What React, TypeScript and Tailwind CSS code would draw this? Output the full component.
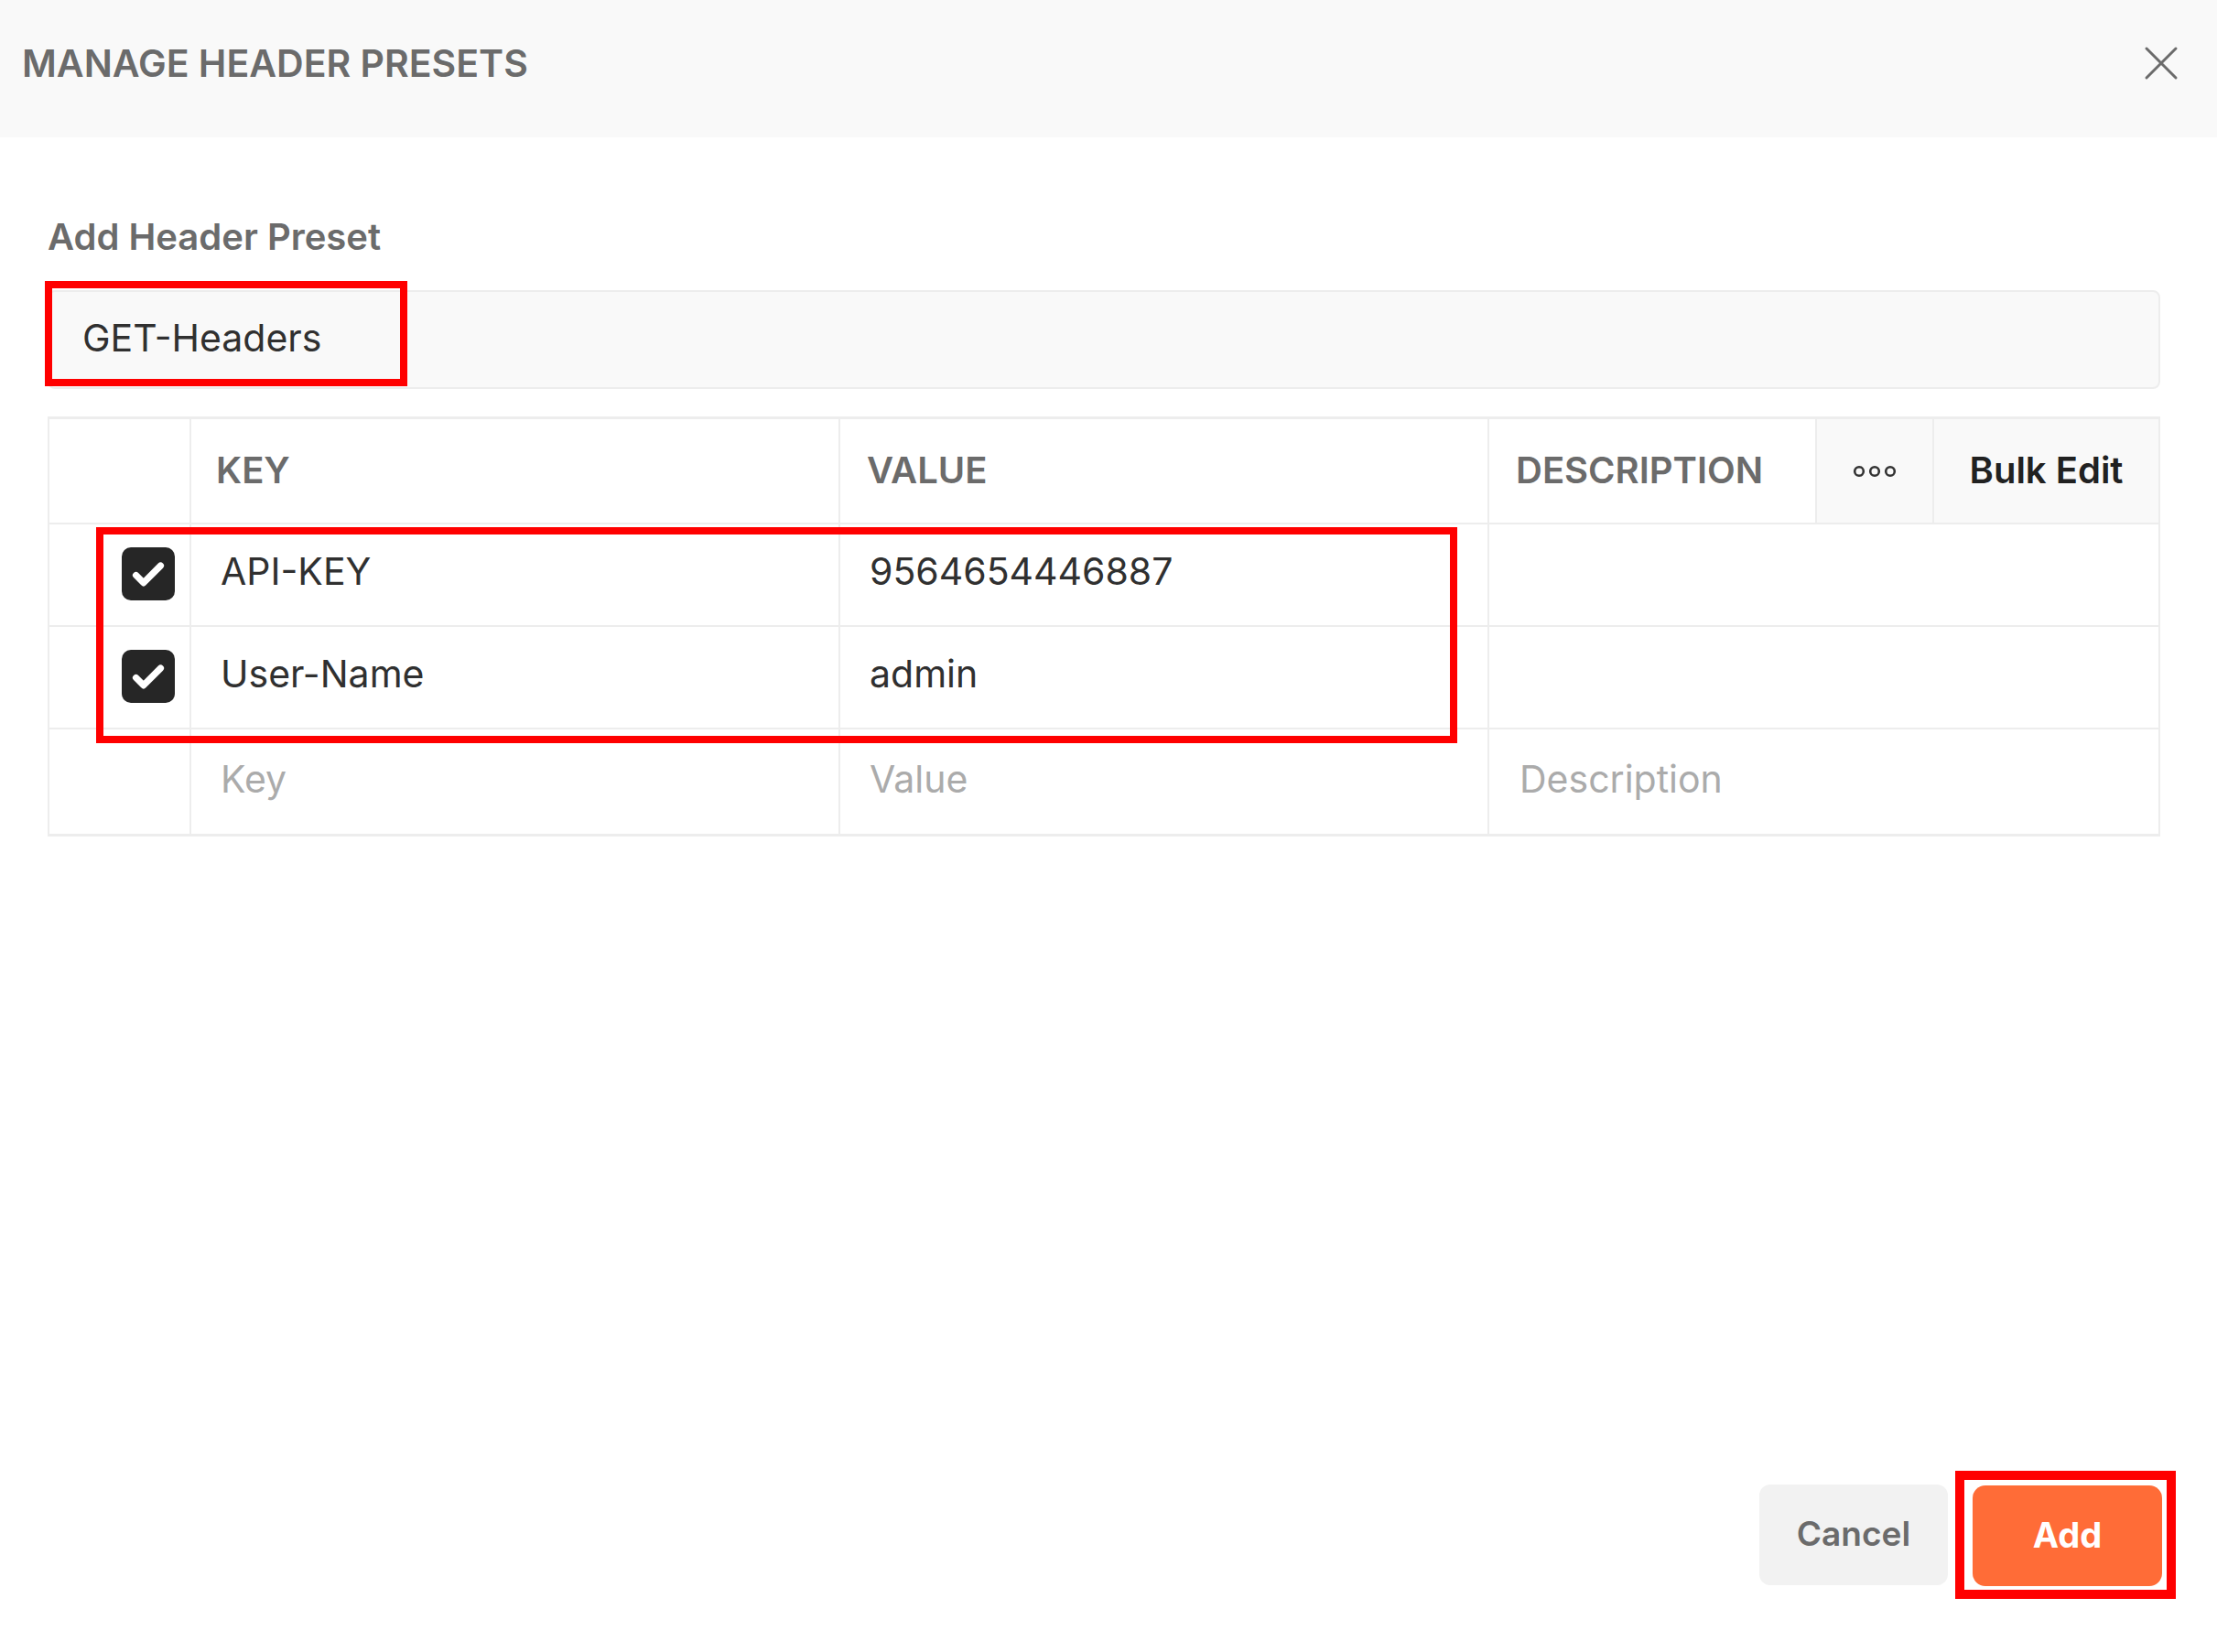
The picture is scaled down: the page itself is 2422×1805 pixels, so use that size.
const headers = [
  { key: "API-KEY", value: "9564654446887" },
  { key: "User-Name", value: "admin" },
];

const CheckIcon = () => (
  <div className="flex h-[58px] w-[58px] items-center justify-center rounded-[10px] bg-[#262626]">
    <svg width="46" height="46" viewBox="0 0 24 24" fill="none">
      <path
        d="M5 12.8l4.3 4.3L19 7.4"
        stroke="#ffffff"
        strokeWidth="3.8"
        strokeLinecap="round"
        strokeLinejoin="round"
      />
    </svg>
  </div>
);

const App = () => {
  return (
    <div className="flex min-h-screen flex-col bg-white font-['Inter','Liberation_Sans',sans-serif]">
      {/* header */}
      <div className="flex h-[150px] items-center justify-between bg-[#f9f9f9] pl-[24px] pr-[41px]">
        <h1 className="pb-[10px] text-[41px] font-semibold text-[#6b6b6b]">
          MANAGE HEADER PRESETS
        </h1>

        <button className="-mt-[12px] flex h-[40px] w-[40px] items-center justify-center">
          <svg width="38" height="38" viewBox="0 0 38 38" fill="none">
            <path
              d="M3 3l32 32M35 3L3 35"
              stroke="#6b6b6b"
              strokeWidth="3"
              strokeLinecap="round"
            />
          </svg>
        </button>
      </div>

      {/* body */}
      <div className="flex-1 pl-[52px] pr-[62px] pt-[85px]">
        <p className="text-[40px] font-semibold leading-[48px] text-[#6b6b6b]">
          Add Header Preset
        </p>

        <div className="relative mt-[34px]">
          <div className="flex h-[108px] items-center rounded-[8px] border-2 border-[#ededed] bg-[#f9f9f9] pb-[2px] pl-[36px] text-[41px] text-[#303030]">
            GET-Headers
          </div>
          <div className="pointer-events-none absolute left-[-3px] top-[-10px] h-[115px] w-[396px] border-[8px] border-[#ff0000]" />
        </div>

        <div className="relative mt-[30px] border-y-[3px] border-x-2 border-[#ededed]">
          {/* table head */}
          <div className="grid h-[115px] grid-cols-[153px_709px_709px_358px_128px_1fr] border-b-2 border-[#ededed] text-[40px] font-semibold">
            <div />
            <div className="flex items-center border-l-2 border-[#ededed] pb-[2px] pl-[27px] text-[#6b6b6b]">
              KEY
            </div>
            <div className="flex items-center border-l-2 border-[#ededed] pb-[2px] pl-[29px] text-[#6b6b6b]">
              VALUE
            </div>
            <div className="flex items-center border-l-2 border-[#ededed] pb-[2px] pl-[29px] text-[#6b6b6b]">
              DESCRIPTION
            </div>
            <div className="flex items-center justify-center border-l-2 border-[#ededed] bg-[#f9f9f9]">
              <svg width="50" height="14" viewBox="0 0 50 14" fill="none">
                <circle cx="8" cy="7" r="4.8" stroke="#333333" strokeWidth="2.6" />
                <circle cx="25" cy="7" r="4.8" stroke="#333333" strokeWidth="2.6" />
                <circle cx="42" cy="7" r="4.8" stroke="#333333" strokeWidth="2.6" />
              </svg>
            </div>
            <div className="flex items-center justify-center border-l-2 border-[#ededed] bg-[#f9f9f9] pb-[2px] text-[#212121]">
              Bulk Edit
            </div>
          </div>

          {/* rows */}
          {headers.map((item) => (
            <div
              key={item.key}
              className="grid h-[112px] grid-cols-[153px_709px_709px_1fr] border-b-2 border-[#ededed] text-[41px] text-[#303030]"
            >
              <div className="flex items-center justify-end pb-[2px] pr-[16px]">
                <CheckIcon />
              </div>
              <div className="flex items-center border-l-2 border-[#ededed] pb-[6px] pl-[32px]">
                {item.key}
              </div>
              <div className="flex items-center border-l-2 border-[#ededed] pb-[6px] pl-[32px]">
                {item.value}
              </div>
              <div className="border-l-2 border-[#ededed]" />
            </div>
          ))}

          <div className="grid h-[114px] grid-cols-[153px_709px_709px_1fr] text-[41px] text-[#ababab]">
            <div />
            <div className="flex items-center border-l-2 border-[#ededed] pb-[4px] pl-[32px]">
              Key
            </div>
            <div className="flex items-center border-l-2 border-[#ededed] pb-[4px] pl-[32px]">
              Value
            </div>
            <div className="flex items-center border-l-2 border-[#ededed] pb-[4px] pl-[33px]">
              Description
            </div>
          </div>

          <div className="pointer-events-none absolute left-[51px] top-[118px] h-[236px] w-[1487px] border-[8px] border-[#ff0000]" />
        </div>
      </div>

      {/* footer */}
      <div className="flex items-center justify-end gap-[8px] pb-[58px] pr-[45px]">
        <button className="h-[110px] w-[206px] rounded-[12px] bg-[#f2f2f2] pb-[2px] text-[37px] font-semibold text-[#6b6b6b]">
          Cancel
        </button>

        <div className="border-[10px] border-[#ff0000] pb-[4px] pl-[9px] pr-[5px] pt-[6px]">
          <button className="h-[110px] w-[207px] rounded-[14px] bg-[#ff6c37] pb-[2px] text-[38px] font-bold text-white">
            Add
          </button>
        </div>
      </div>
    </div>
  );
};

export default App;
